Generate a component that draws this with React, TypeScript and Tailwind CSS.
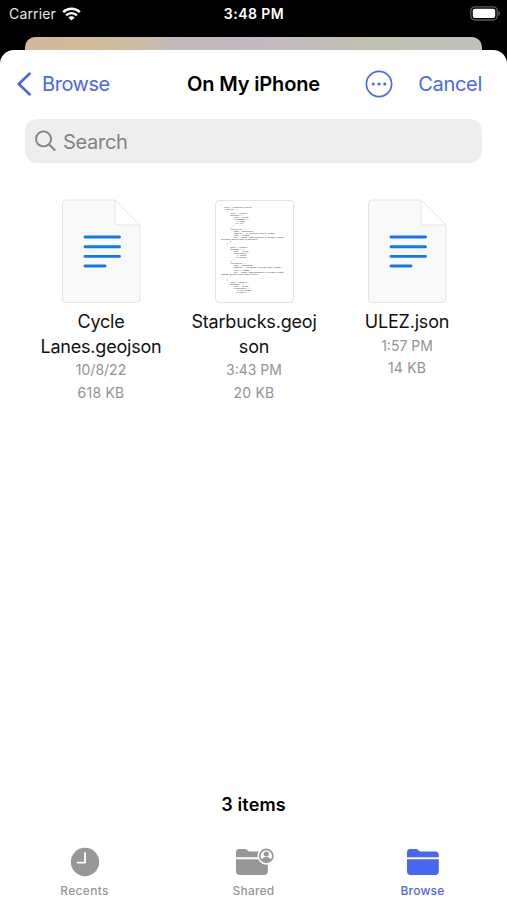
import React from 'react';

interface FileItem {
  name: string[];
  date: string;
  size: string;
  preview?: string;
}

const geojsonPreview = `{
   "type": "FeatureCollection",
   "features": [
      {
         "type": "Feature",
         "geometry": {
            "type": "Point",
            "coordinates": [
               -0.14883,
               51.5101
            ]
         },
         "properties": {
            "name": "Starbucks",
            "address": "10 Grosvenor Street, London",
            "city": "London",
            "url": "https://www.starbucks.co.uk/store/london
/grosvenor-street/details-and-hours"
         }
      },
      {
         "type": "Feature",
         "geometry": {
            "type": "Point",
            "coordinates": [
               -0.1245521,
               51.508903
            ]
         },
         "properties": {
            "name": "Starbucks",
            "address": "442 Strand, Charing Cross, London",
            "city": "London",
            "url": "https://www.starbucks.co.uk/store/london
/strand-charing-cross/details-hours"
         }
      },
      {
         "type": "Feature",
         "geometry": {
            "type": "Point",
            "coordinates": [
               -0.13419890237,
               51.5136440`;

const files: FileItem[] = [
  { name: ['Cycle', 'Lanes.geojson'], date: '10/8/22', size: '618 KB' },
  { name: ['Starbucks.geoj', 'son'], date: '3:43 PM', size: '20 KB', preview: geojsonPreview },
  { name: ['ULEZ.json'], date: '1:57 PM', size: '14 KB' },
];

const WifiIcon = () => (
  <svg width="19" height="14" viewBox="0 0 19 14" fill="none" stroke="white">
    <path d="M1.2 5.1a11.9 11.9 0 0 1 16.6 0" strokeWidth="2.5" />
    <path d="M4.1 8.3a7.7 7.7 0 0 1 10.8 0" strokeWidth="2.4" />
    <path d="M9.5 13.6 6.4 10.5a4.4 4.4 0 0 1 6.2 0z" fill="white" stroke="none" />
  </svg>
);

const BatteryIcon = () => (
  <svg width="31" height="15" viewBox="0 0 31 15" fill="none">
    <rect x="0.8" y="0.8" width="26.4" height="13.2" rx="4" stroke="#5c5c5c" strokeWidth="1.3" />
    <rect x="2.8" y="2.8" width="22.4" height="9.2" rx="2" fill="white" />
    <path d="M28.4 4.900v5c1-.4 1.700-1.400 1.700-2.500S29.400 5.300 28.400 4.900z" fill="#5c5c5c" />
  </svg>
);

const DocumentIcon = () => (
  <svg width="80" height="105" viewBox="0 0 80 105" fill="none">
    <path
      d="M5 1H54L79 26V100A3.500 3.500 0 0 1 75.500 103.500H5A3.500 3.500 0 0 1 1.500 100V4.500A3.500 3.500 0 0 1 5 1z"
      fill="#f9f9fa"
      stroke="#e4e4e5"
    />
    <path d="M54 1 79 26H57.500A3.500 3.500 0 0 1 54 22.500z" fill="white" stroke="#e4e4e5" strokeLinejoin="round" />
    <path
      d="M24 38H58.500M24 47.700H58.500M24 57.400H58.500M24 67H44"
      stroke="#0f7af0"
      strokeWidth="2.900"
      strokeLinecap="round"
    />
  </svg>
);

const ClockIcon = () => (
  <svg width="30" height="30" viewBox="0 0 30 30" fill="none">
    <circle cx="15" cy="15" r="14.200" fill="#979797" />
    <path d="M15 5.800V15.600H7.500" stroke="white" strokeWidth="1.800" strokeLinecap="round" strokeLinejoin="round" />
  </svg>
);

const FolderIcon = ({ shared = false }: { shared?: boolean }) => (
  <svg width={shared ? 40 : 34} height="28" viewBox={shared ? '0 0 40 28' : '0 0 34 28'} fill="none">
    <g fill="currentColor">
      <path d="M1 9.200V4.200C1 2.200 2.200 1 4.200 1H9.200C10.600 1 11.300 1.300 12.200 2.100L13 2.800C13.700 3.400 14.200 3.600 15.200 3.600H29C31.400 3.600 32.800 4.900 32.800 7.200V9.200z" />
      <path d="M1 11.200H32.800V23.200C32.800 25.700 31.500 27 29 27H4.800C2.300 27 1 25.700 1 23.200z" />
    </g>
    {shared && (
      <>
        <circle cx="31.300" cy="7.900" r="8.800" fill="white" />
        <circle cx="31.300" cy="7.900" r="6.500" stroke="currentColor" strokeWidth="1.700" />
        <circle cx="31.300" cy="5.900" r="2.500" fill="currentColor" />
        <path d="M26.900 12C27.200 9.900 28.900 9 31.300 9S35.400 9.900 35.700 12A6 6 0 0 1 26.900 12z" fill="currentColor" />
      </>
    )}
  </svg>
);

const StatusBar = () => (
  <div className="flex h-[37px] items-start justify-between pt-[5px] pr-[6px] pl-[9px] text-white">
    <div className="flex w-[119px] items-center gap-[6px]">
      <span className="text-[14px] leading-[18px] tracking-[0.15px] text-gray-200">Carrier</span>
      <WifiIcon />
    </div>
    <span className="text-[14px] leading-[18px] font-semibold tracking-[0.45px]">3:48 PM</span>
    <div className="flex w-[121px] justify-end pt-[1px]">
      <BatteryIcon />
    </div>
  </div>
);

const NavBar = () => (
  <div className="flex h-[69px] items-center justify-between pr-[25px] pl-[17px] text-[20px] text-[#4a68e8]">
    <button className="flex w-[150px] items-center gap-[10px] pb-px">
      <svg width="15" height="24" viewBox="0 0 15 24" fill="none" stroke="currentColor" strokeWidth="2.700" strokeLinecap="round" strokeLinejoin="round">
        <path d="M12.500 1.800 1.800 12 12.500 22.200" />
      </svg>
      <span className="tracking-[-0.45px]">Browse</span>
    </button>
    <h1 className="pb-px font-semibold tracking-[-0.150px] whitespace-nowrap text-black">On My iPhone</h1>
    <div className="flex w-[142px] items-center justify-end gap-[25px] pb-px">
      <svg width="28" height="28" viewBox="0 0 28 28" fill="none">
        <circle cx="14" cy="14" r="12.600" stroke="currentColor" strokeWidth="1.700" />
        <g fill="currentColor">
          <circle cx="8.200" cy="14" r="1.600" />
          <circle cx="14" cy="14" r="1.600" />
          <circle cx="19.800" cy="14" r="1.600" />
        </g>
      </svg>
      <button className="tracking-[-0.3px]">Cancel</button>
    </div>
  </div>
);

const FileCard = ({ file }: { file: FileItem }) => (
  <div className="flex w-[153px] flex-col items-center text-center">
    {file.preview ? (
      <div className="h-[105px] w-[80px] pt-px pl-px">
        <pre className="h-[103px] w-[79px] overflow-hidden rounded-[4px] border border-[#e4e4e5] pt-[4px] pl-[5px] text-left font-['Liberation_Mono',monospace] text-[1.750px] leading-[2.020px] text-black">
          {file.preview}
        </pre>
      </div>
    ) : (
      <DocumentIcon />
    )}
    <div className="mt-[6px] pl-px text-[18px] leading-[24.500px] tracking-[-0.2px] text-[#111111]">
      {file.name.map((line) => (
        <div key={line}>{line}</div>
      ))}
    </div>
    <div className="pl-px text-[14px] leading-[22.500px] text-[#939393]">
      <div>{file.date}</div>
      <div className="tracking-[0.2px]">{file.size}</div>
    </div>
  </div>
);

const TabBar = () => (
  <div className="flex h-[56px] text-[12px] leading-[16px] font-medium text-[#979797]">
    <div className="flex w-[169px] flex-col items-center">
      <div className="flex h-[39px] items-center pb-[3px]"><ClockIcon /></div>
      <span className="tracking-[0.3px]">Recents</span>
    </div>
    <div className="flex w-[169px] flex-col items-center">
      <div className="flex h-[39px] items-center pb-[3px] pl-[3px]"><FolderIcon shared /></div>
      <span className="tracking-[0.2px]">Shared</span>
    </div>
    <div className="flex w-[169px] flex-col items-center text-[#4966ef]">
      <div className="flex h-[39px] items-center pb-[3px]"><FolderIcon /></div>
      <span className="tracking-[0.2px]">Browse</span>
    </div>
  </div>
);

const App: React.FC = () => {
  return (
    <div className="flex h-[900px] w-[507px] flex-col overflow-hidden bg-black font-['Inter',sans-serif]">
      <StatusBar />
      {/* Edge of the sheet underneath */}
      <div className="mx-[25px] h-[13px] shrink-0 rounded-t-[10px] bg-[linear-gradient(to_right,#d3b69c_0%,#d1bb98_15%,#cbbda5_25%,#c3b8bc_33%,#c4b8c1_50%,#c2bdb9_65%,#c1c1b0_75%,#c1c1bd_100%)]" />
      <main className="flex flex-1 flex-col rounded-t-[14px] bg-white">
        <NavBar />
        <div className="mx-[25px] flex h-[44px] items-center gap-[6px] rounded-[12px] bg-[#eeeeee] pl-[10px] text-[20px] text-[#828282]">
          <svg width="22" height="22" viewBox="0 0 22 22" fill="none" stroke="currentColor" strokeWidth="1.900" strokeLinecap="round">
            <circle cx="8.500" cy="8.900" r="7.500" />
            <path d="m14.100 14.500 5.500 5.500" />
          </svg>
          <span className="pt-px tracking-[-0.3px]">Search</span>
        </div>
        <div className="mt-[36px] flex justify-center">
          {files.map((file) => (
            <FileCard key={file.date} file={file} />
          ))}
        </div>
        <p className="mt-auto mb-[27px] text-center text-[18px] leading-[24px] font-semibold tracking-[0.15px] text-black">3 items</p>
        <TabBar />
      </main>
    </div>
  );
};

export default App;
